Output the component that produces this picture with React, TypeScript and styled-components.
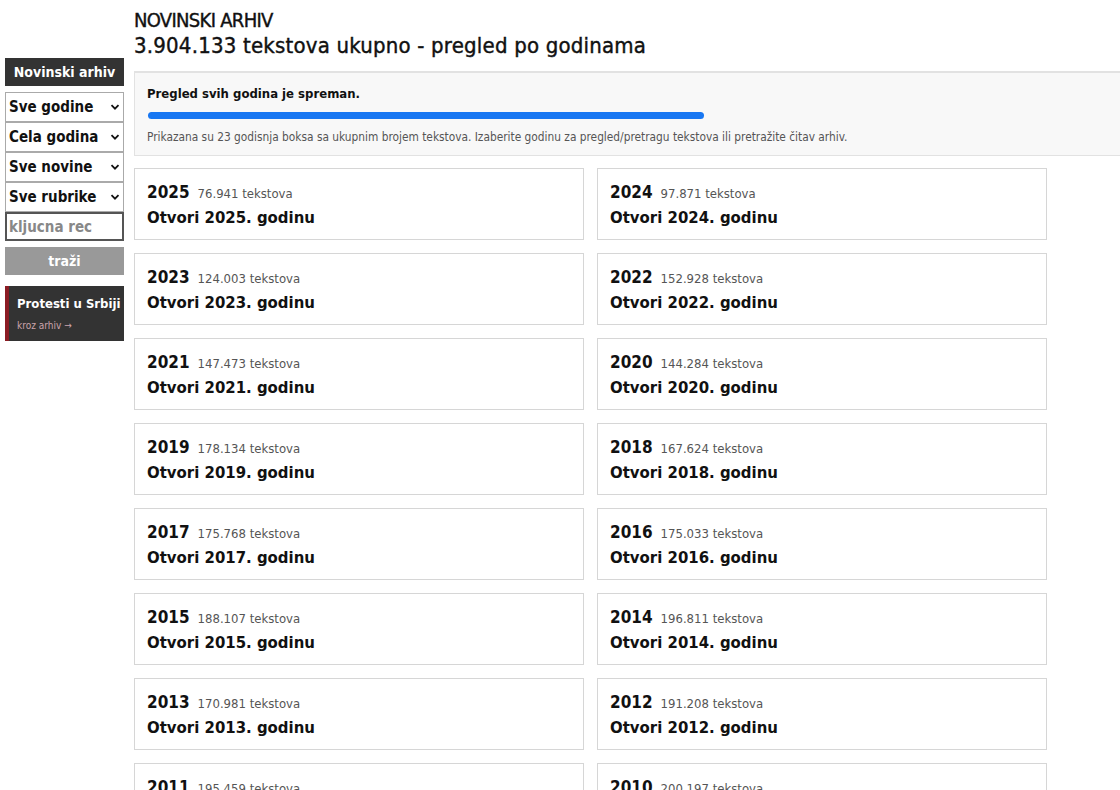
import { FC } from 'react';
import styled, { createGlobalStyle } from 'styled-components';

const GlobalStyle = createGlobalStyle`
  html, body {
    margin: 0;
    padding: 0;
    background: #fff;
    overflow-x: hidden;
  }
  body {
    font-family: 'DejaVu Sans Condensed', 'DejaVu Sans', sans-serif;
    color: #111;
  }
`;

const years = [
  { year: 2025, count: '76.941' },
  { year: 2024, count: '97.871' },
  { year: 2023, count: '124.003' },
  { year: 2022, count: '152.928' },
  { year: 2021, count: '147.473' },
  { year: 2020, count: '144.284' },
  { year: 2019, count: '178.134' },
  { year: 2018, count: '167.624' },
  { year: 2017, count: '175.768' },
  { year: 2016, count: '175.033' },
  { year: 2015, count: '188.107' },
  { year: 2014, count: '196.811' },
  { year: 2013, count: '170.981' },
  { year: 2012, count: '191.208' },
  { year: 2011, count: '195.459' },
  { year: 2010, count: '200.197' },
  { year: 2009, count: '203.412' },
  { year: 2008, count: '211.086' },
  { year: 2007, count: '198.530' },
  { year: 2006, count: '184.772' },
  { year: 2005, count: '169.305' },
  { year: 2004, count: '142.618' },
  { year: 2003, count: '118.240' },
];

const Page = styled.div`
  display: flex;
  align-items: flex-start;
  gap: 10px;
  padding-left: 5px;
`;

const Sidebar = styled.aside`
  width: 119px;
  flex-shrink: 0;
  margin-top: 58px;
  display: flex;
  flex-direction: column;
`;

const SideTitle = styled.div`
  height: 28px;
  background: #333;
  color: #fff;
  font-weight: bold;
  font-size: 14px;
  display: flex;
  align-items: center;
  justify-content: center;
  margin-bottom: 6px;
`;

const SelectBox = styled.div`
  height: 28px;
  border: 1px solid #aaa;
  background: #fff;
  display: flex;
  align-items: center;
  justify-content: space-between;
  padding: 0 3px 0 3px;
  font-weight: bold;
  font-size: 15px;
  color: #111;
`;

const Chevron = styled.svg`
  width: 10px;
  height: 10px;
`;

const KeywordInput = styled.input`
  height: 25px;
  border: 2px solid #555;
  box-sizing: content-box;
  padding: 0 2px;
  width: 111px;
  font-family: inherit;
  font-weight: bold;
  font-size: 15px;
  color: #111;
  outline: none;
  &::placeholder {
    color: #888;
  }
`;

const SearchButton = styled.button`
  margin-top: 6px;
  height: 28px;
  border: none;
  background: #999;
  color: #fff;
  font-family: inherit;
  font-weight: bold;
  font-size: 14px;
`;

const Promo = styled.div`
  margin-top: 11px;
  height: 55px;
  box-sizing: border-box;
  background: #333;
  border-left: 4px solid #8a1c24;
  padding: 10px 0 0 8px;
  display: flex;
  flex-direction: column;
  gap: 9px;
`;

const PromoTitle = styled.span`
  color: #fff;
  font-weight: bold;
  font-size: 13px;
`;

const PromoLink = styled.span`
  color: #caa3ab;
  font-size: 10px;
`;

const Main = styled.main`
  flex: 1;
  min-width: 0;
  margin-right: -2px;
`;

const Heading = styled.h1`
  margin: 8px 0 13px;
  font-weight: normal;
  color: #111;
  -webkit-text-stroke: 0.4px #111;
`;

const HeadingLine = styled.span<{ $size: number; $spacing: number }>`
  display: block;
  font-size: ${(p) => p.$size}px;
  letter-spacing: ${(p) => p.$spacing}px;
  line-height: 25px;
`;

const StatusPanel = styled.section`
  background: #f8f8f8;
  border: 1px solid #e2e2e2;
  border-top-width: 2px;
  padding: 13px 12px 11px;
  margin-bottom: 12px;
`;

const StatusTitle = styled.div`
  font-weight: bold;
  font-size: 13px;
  color: #111;
`;

const ProgressTrack = styled.div`
  width: 556px;
  height: 7px;
  margin: 11px 0 11px 1px;
  border-radius: 4px;
  background: #1877f2;
`;

const StatusNote = styled.div`
  font-size: 11.8px;
  color: #555;
`;

const YearGrid = styled.div`
  display: grid;
  grid-template-columns: repeat(2, 450px);
  gap: 13px;
`;

const YearCard = styled.a`
  height: 72px;
  box-sizing: border-box;
  border: 1px solid #d6d6d6;
  background: #fff;
  padding: 13px 12px 0;
  text-decoration: none;
  color: #111;
  display: flex;
  flex-direction: column;
  gap: 6px;
`;

const YearLine = styled.div`
  display: flex;
  align-items: baseline;
  gap: 8px;
`;

const YearNumber = styled.span`
  font-weight: bold;
  font-size: 17px;
`;

const YearCount = styled.span`
  font-size: 13px;
  color: #555;
`;

const OpenLink = styled.span`
  font-weight: bold;
  font-size: 16.6px;
`;

const selects = ['Sve godine', 'Cela godina', 'Sve novine', 'Sve rubrike'];

const App: FC = () => {
  return (
    <>
      <GlobalStyle />
      <Page>
        <Sidebar>
          <SideTitle>Novinski arhiv</SideTitle>
          {selects.map((label) => (
            <SelectBox key={label}>
              {label}
              <Chevron viewBox="0 0 10 10">
                <path d="M1.5 3.2 5 6.7 8.5 3.2" fill="none" stroke="#111" strokeWidth="1.8" />
              </Chevron>
            </SelectBox>
          ))}
          <KeywordInput placeholder="kljucna rec" />
          <SearchButton>traži</SearchButton>
          <Promo>
            <PromoTitle>Protesti u Srbiji</PromoTitle>
            <PromoLink>kroz arhiv →</PromoLink>
          </Promo>
        </Sidebar>
        <Main>
          <Heading>
            <HeadingLine $size={20} $spacing={-0.7}>
              NOVINSKI ARHIV
            </HeadingLine>
            <HeadingLine $size={22} $spacing={0.2}>
              3.904.133 tekstova ukupno - pregled po godinama
            </HeadingLine>
          </Heading>
          <StatusPanel>
            <StatusTitle>Pregled svih godina je spreman.</StatusTitle>
            <ProgressTrack />
            <StatusNote>
              Prikazana su 23 godisnja boksa sa ukupnim brojem tekstova. Izaberite godinu za
              pregled/pretragu tekstova ili pretražite čitav arhiv.
            </StatusNote>
          </StatusPanel>
          <YearGrid>
            {years.map(({ year, count }) => (
              <YearCard key={year} href="#">
                <YearLine>
                  <YearNumber>{year}</YearNumber>
                  <YearCount>{count} tekstova</YearCount>
                </YearLine>
                <OpenLink>Otvori {year}. godinu</OpenLink>
              </YearCard>
            ))}
          </YearGrid>
        </Main>
      </Page>
    </>
  );
};

export default App;
